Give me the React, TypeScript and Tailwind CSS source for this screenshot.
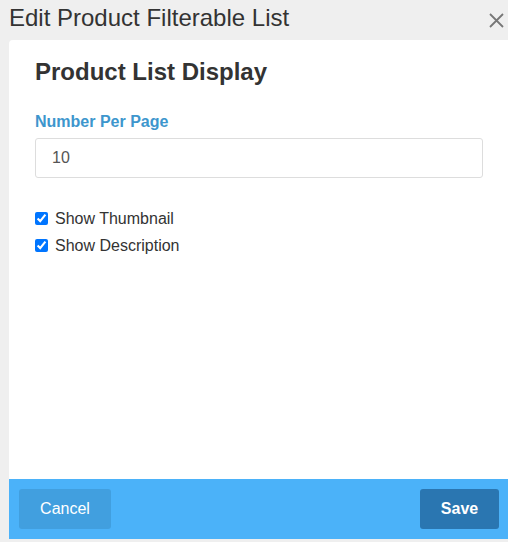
import React, { useState } from 'react';

const font = { fontFamily: '"Liberation Sans", Arial, sans-serif' };

export default function App() {
  const [perPage, setPerPage] = useState('10');
  const [showThumb, setShowThumb] = useState(true);
  const [showDesc, setShowDesc] = useState(true);

  return (
    <div className="flex h-[542px] w-[508px] flex-col overflow-hidden bg-[#efefef]" style={font}>
      {/* modal header */}
      <div className="flex h-[40px] shrink-0 items-start justify-between pl-[9px] pt-[4px]">
        <h1 className="text-[24px] leading-[28px] text-[#333]">Edit Product Filterable List</h1>
        <button className="mr-[4px] mt-[9px] text-[#777]" aria-label="Close">
          <svg width="15" height="15" viewBox="0 0 15 15" fill="none" stroke="currentColor" strokeWidth="1.8">
            <path d="M1 1 L14 14 M14 1 L1 14" />
          </svg>
        </button>
      </div>

      {/* modal body */}
      <div className="ml-[9px] flex flex-1 flex-col rounded-tl-[4px] bg-white">
        <div className="flex-1 pl-[26px] pr-[25px] pt-[18px]">
          <h2 className="text-[24px] font-bold leading-[28px] text-[#333]">Product List Display</h2>

          <label className="mt-[26px] block text-[16px] font-bold leading-[20px] text-[#3d96cd]">
            Number Per Page
          </label>
          <input
            type="text"
            value={perPage}
            onChange={(e) => setPerPage(e.target.value)}
            className="mt-[6px] block h-[40px] w-full rounded-[3px] border border-[#ddd] px-[16px] text-[16px] text-[#555] outline-none"
          />

          <div className="mt-[27px] flex flex-col">
            <label className="flex h-[27px] items-center text-[16px] text-[#333]">
              <input
                type="checkbox"
                checked={showThumb}
                onChange={(e) => setShowThumb(e.target.checked)}
                className="m-0 mr-[7px] h-[13px] w-[13px]"
              />
              Show Thumbnail
            </label>
            <label className="flex h-[27px] items-center text-[16px] text-[#333]">
              <input
                type="checkbox"
                checked={showDesc}
                onChange={(e) => setShowDesc(e.target.checked)}
                className="m-0 mr-[7px] h-[13px] w-[13px]"
              />
              Show Description
            </label>
          </div>
        </div>

        {/* footer */}
        <div className="flex h-[60px] shrink-0 items-center justify-between bg-[#4bb2f9] pl-[10px] pr-[9px]">
          <button className="h-[40px] w-[92px] rounded-[3px] bg-[#419fdf] text-[16px] text-white">Cancel</button>
          <button className="h-[40px] w-[79px] rounded-[3px] bg-[#2a76b1] text-[16px] font-bold text-white">Save</button>
        </div>
      </div>
      <div className="h-[3px] shrink-0" />
    </div>
  );
}
